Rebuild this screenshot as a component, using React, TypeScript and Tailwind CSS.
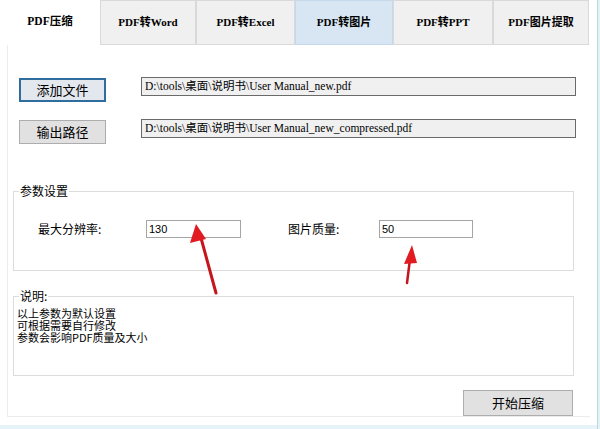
const tabs = [
  { label: "PDF压缩", w: "w-[100px]", state: "active" },
  { label: "PDF转Word", w: "w-[96px]", state: "idle" },
  { label: "PDF转Excel", w: "w-[99px]", state: "idle" },
  { label: "PDF转图片", w: "w-[98px]", state: "hover" },
  { label: "PDF转PPT", w: "w-[100px]", state: "idle" },
  { label: "PDF图片提取", w: "w-[96px]", state: "idle" },
];

const serif = { fontFamily: '"Liberation Serif", "Noto Sans CJK SC", serif' };
const sans = { fontFamily: '"Noto Sans CJK SC", "Liberation Sans", sans-serif' };

export default function App() {
  return (
    <div className="relative w-[600px] h-[429px] bg-white overflow-hidden text-black" style={sans}>
      <div className="flex flex-row h-full">
        <div className="flex flex-col w-[597px] h-full">
          {/* tab bar */}
          <div className="flex flex-row h-[45px]">
            {tabs.map((t) => (
              <div
                key={t.label}
                style={serif}
                className={
                  t.state === "active"
                    ? `${t.w} h-full flex items-center justify-center bg-white text-[11.5px] font-bold pb-[1px]`
                    : t.state === "hover"
                    ? `${t.w} h-full flex items-center justify-center bg-[#d8e6f3] border border-[#c4d9ec] text-[11px] font-bold`
                    : `${t.w} h-full flex items-center justify-center bg-[#f0f0f0] border border-[#d9d9d9] text-[11px] font-bold`
                }
              >
                {t.label}
              </div>
            ))}
          </div>

          {/* tab page */}
          <div className="flex flex-col ml-[7px] w-[583px] h-[372px] border-l border-b border-[#ececec]">
            <div className="flex flex-col pl-[11px] pt-[32px]">
              <div className="flex flex-row items-start gap-[35px]">
                <button className="mt-[1px] w-[87px] h-[24px] bg-[#e3e8ee] border-2 border-[#2f6d9c] text-[13px]">
                  添加文件
                </button>
                <div
                  style={serif}
                  className="w-[435px] h-[19px] bg-[#f0f0f0] border border-[#6a6a6a] text-[11.5px] leading-[17px] pl-[3px] whitespace-nowrap"
                >
                  D:\tools\桌面\说明书\User Manual_new.pdf
                </div>
              </div>
              <div className="flex flex-row items-start gap-[35px] mt-[17px]">
                <button className="mt-[1px] w-[87px] h-[24px] bg-[#e1e1e1] border border-[#adadad] text-[13px]">
                  输出路径
                </button>
                <div
                  style={serif}
                  className="w-[435px] h-[19px] bg-[#f0f0f0] border border-[#6a6a6a] text-[11.5px] leading-[17px] pl-[3px] whitespace-nowrap"
                >
                  D:\tools\桌面\说明书\User Manual_new_compressed.pdf
                </div>
              </div>
            </div>

            {/* 参数设置 */}
            <fieldset className="mt-[40px] ml-[5px] w-[561px] h-[87px] border border-[#dcdcdc]">
              <legend className="ml-[5px] px-[1px] text-[12px] leading-[14px]">参数设置</legend>
              <div className="flex flex-row items-center mt-[22px] text-[12px]">
                <span className="ml-[24px] w-[108px]">最大分辨率:</span>
                <div className="w-[95px] h-[18px] border border-[#a5a5a5] text-[11px] leading-[16px] pl-[2px]" style={{ fontFamily: '"Liberation Sans", sans-serif' }}>
                  130
                </div>
                <span className="ml-[47px] w-[91px]">图片质量:</span>
                <div className="w-[94px] h-[18px] border border-[#a5a5a5] text-[11px] leading-[16px] pl-[2px]" style={{ fontFamily: '"Liberation Sans", sans-serif' }}>
                  50
                </div>
              </div>
            </fieldset>

            {/* 说明 */}
            <fieldset className="mt-[18px] ml-[5px] w-[561px] h-[87px] border border-[#dcdcdc]">
              <legend className="ml-[5px] px-[1px] text-[12px] leading-[14px]">说明:</legend>
              <div className="flex flex-col pl-[3px] pt-[4px] text-[11px] leading-[12px]">
                <span>以上参数为默认设置</span>
                <span>可根据需要自行修改</span>
                <span>参数会影响PDF质量及大小</span>
              </div>
            </fieldset>

            <div className="flex flex-row justify-end pr-[17px] mt-[14px]">
              <button className="w-[110px] h-[26px] bg-[#e1e1e1] border border-[#adadad] text-[13px]">
                开始压缩
              </button>
            </div>
          </div>
          <div className="flex-1 mt-[8px] bg-[#e6f3f8]" />
        </div>
        <div className="w-[3px] h-full bg-[#e4f1f5] border-l border-[#b9d8e2]" />
      </div>

      {/* red annotation arrows */}
      <svg className="absolute inset-0 pointer-events-none" width="600" height="429" viewBox="0 0 600 429">
        <line x1="216" y1="293" x2="201" y2="238" stroke="#c4161c" strokeWidth="3" strokeLinecap="round" />
        <polygon points="196,224 190,243 206,239" fill="#e01b22" />
        <line x1="407" y1="283" x2="410" y2="259" stroke="#c4161c" strokeWidth="2.5" strokeLinecap="round" />
        <polygon points="412,245 404,264 417,263" fill="#e01b22" />
      </svg>
    </div>
  );
}
